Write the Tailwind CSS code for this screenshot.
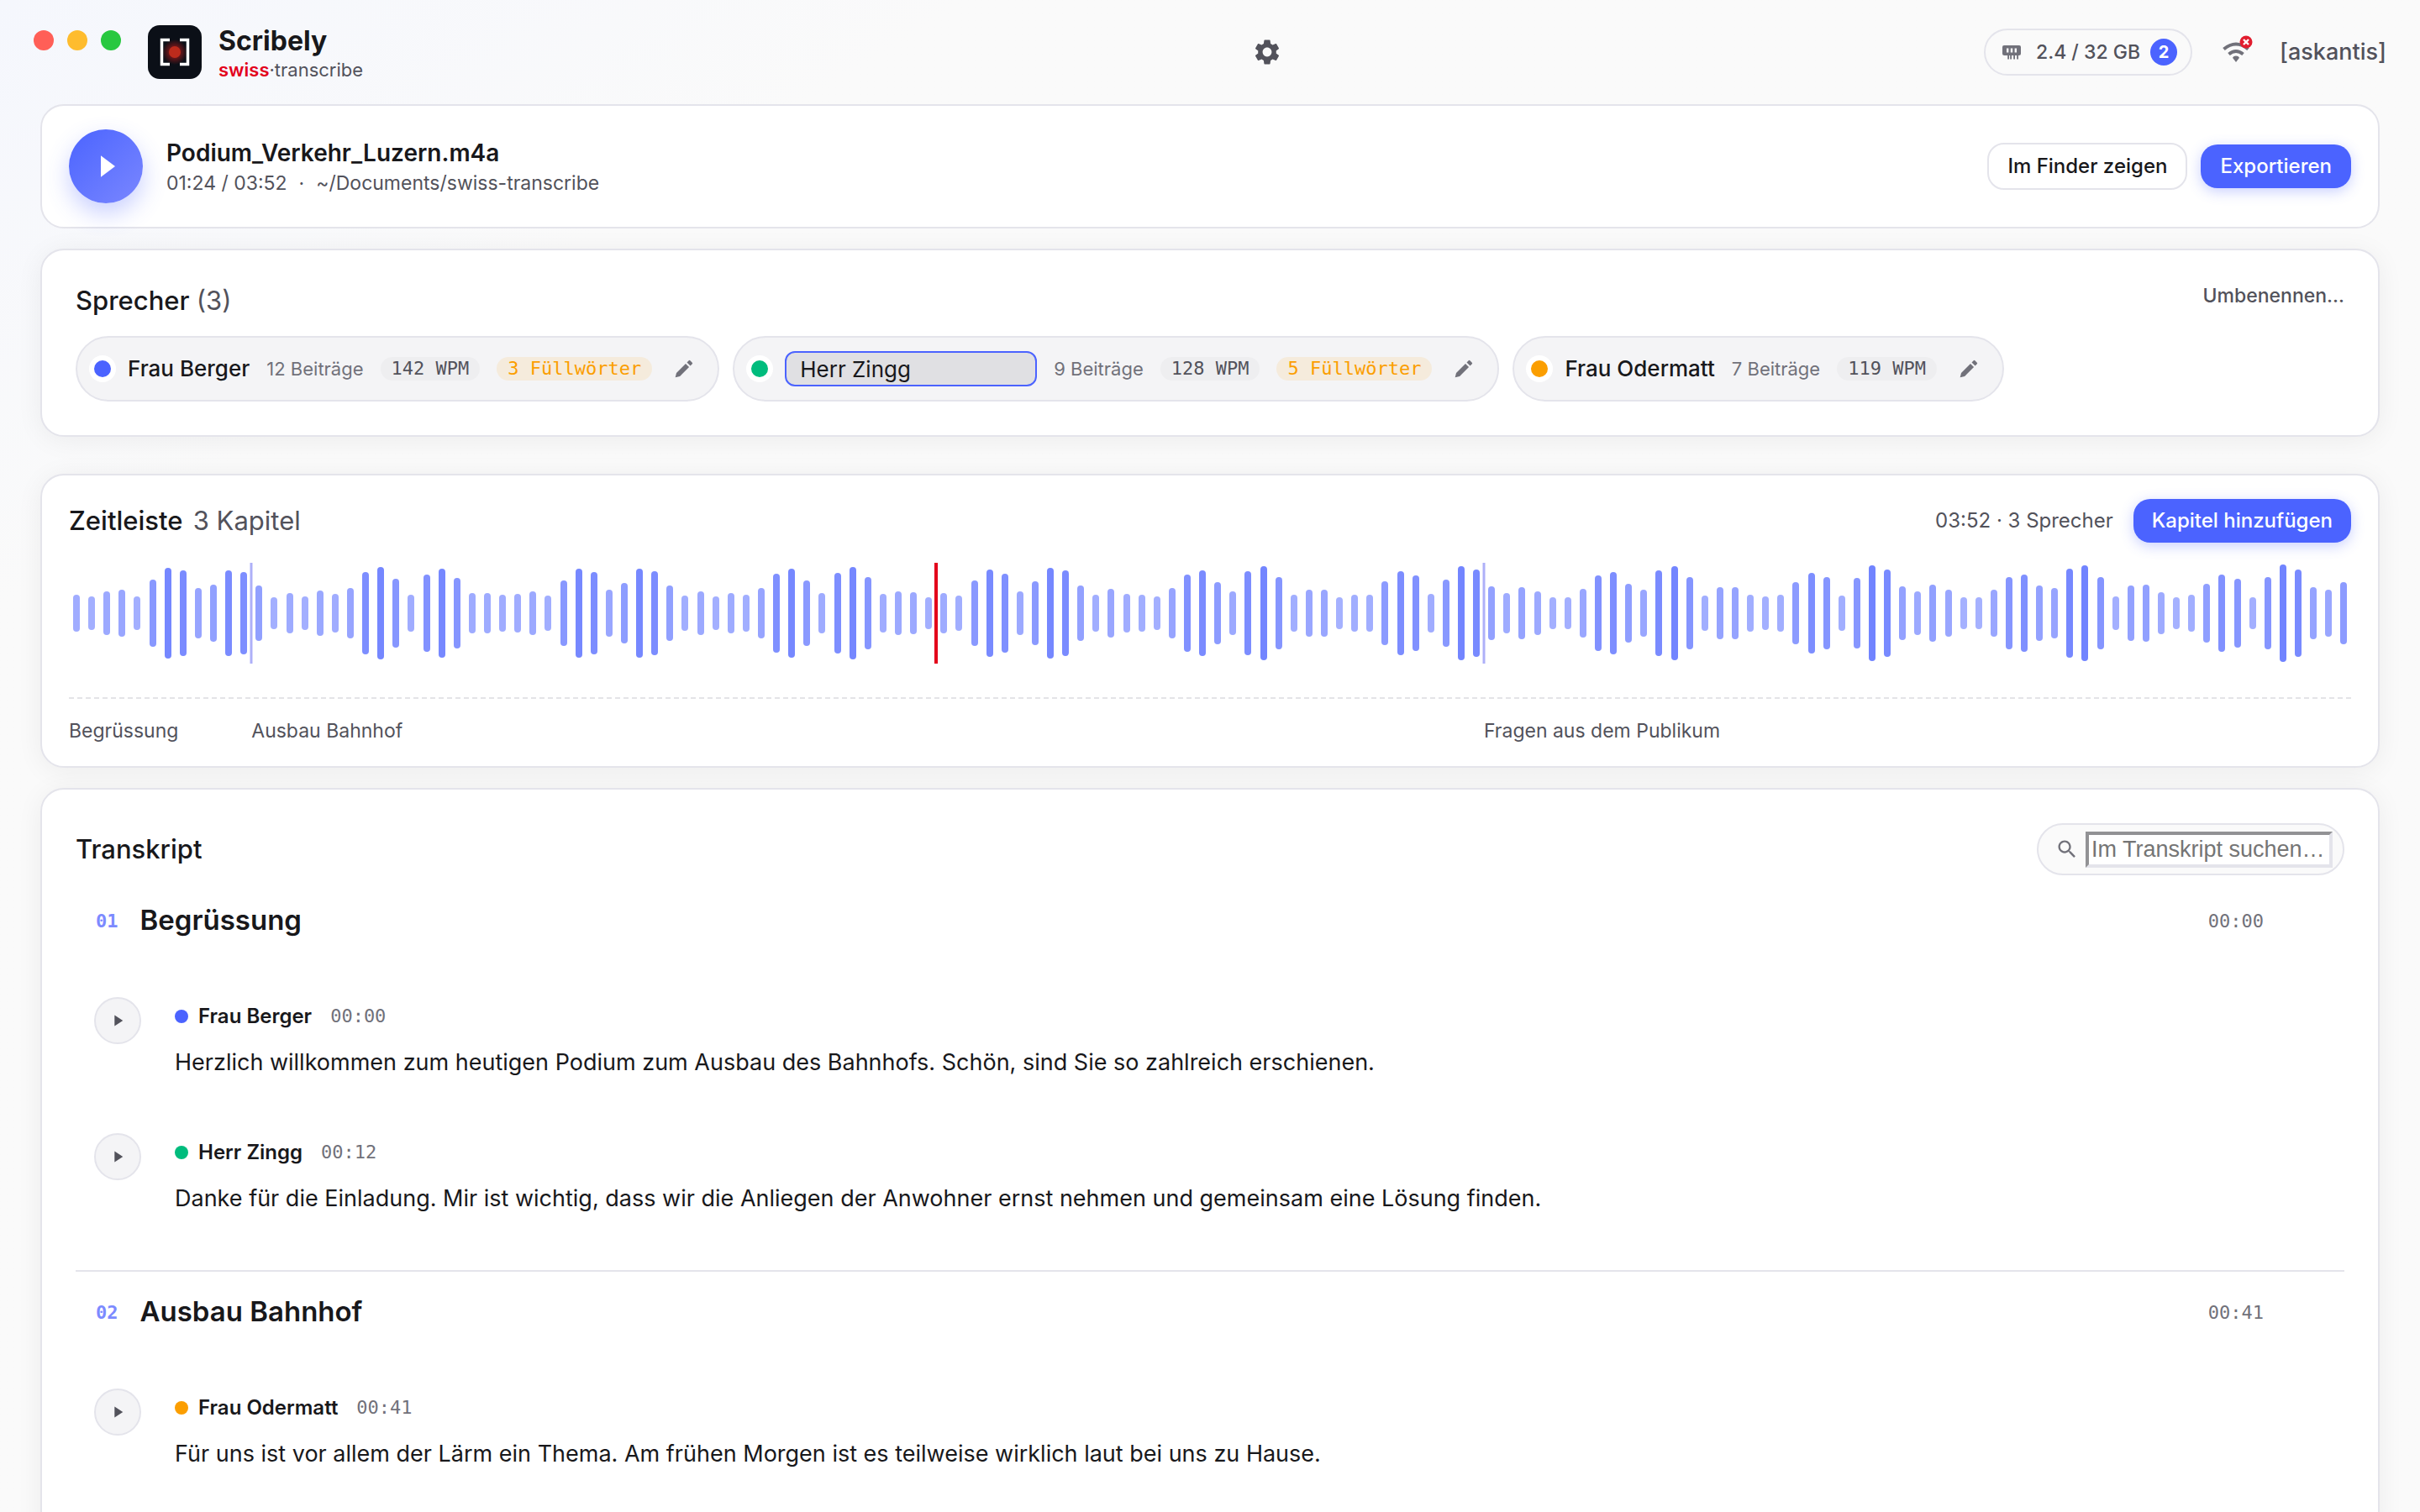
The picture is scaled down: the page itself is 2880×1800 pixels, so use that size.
<!DOCTYPE html>
<html lang="de">
<head>
<meta charset="utf-8">
<meta name="viewport" content="width=device-width, initial-scale=1">
<title>Scribely</title>
<script src="https://cdn.jsdelivr.net/npm/@tailwindcss/browser@4"></script>
</head>
<body class="h-screen overflow-hidden bg-[#fafafa] bg-linear-to-br from-[#f5f7fd] via-[#fafafa] via-20% to-[#fafafa] font-['Inter',sans-serif] text-[#18181b]">

<svg class="hidden" aria-hidden="true">
  <symbol id="pencil" viewBox="0 0 24 24"><path d="M3.2 20.8 4.3 16.2 13.7 6.8 17.2 10.3 7.8 19.7Z"/><path d="M15 5.500 16.900 3.600Q17.600 2.900 18.300 3.600L20.400 5.700Q21.100 6.400 20.400 7.100L18.500 9Z"/></symbol>
  <symbol id="play" viewBox="0 0 12 12"><path d="M2 0.500 10.500 6 2 11.500Z"/></symbol>
</svg>

<header class="relative grid h-31 grid-cols-[1fr_auto_1fr] items-center pr-10 pl-44">
  <div class="absolute top-9 left-10 flex gap-4">
    <button aria-label="Schliessen" class="size-6 rounded-full bg-[#ff5f57]"></button>
    <button aria-label="Minimieren" class="size-6 rounded-full bg-[#febc2e]"></button>
    <button aria-label="Maximieren" class="size-6 rounded-full bg-[#28c840]"></button>
  </div>
  <div class="flex items-center gap-5">
    <svg class="size-16" viewBox="0 0 64 64" aria-hidden="true">
      <defs><radialGradient id="glow"><stop offset="0.3" stop-color="#b91c1c" stop-opacity="0.7"/><stop offset="1" stop-color="#b91c1c" stop-opacity="0"/></radialGradient></defs>
      <rect width="64" height="64" rx="14" fill="#0b0f17"/>
      <circle cx="32" cy="32" r="15" fill="url(#glow)"/>
      <path d="M26 17.500H16.500V46.500H26M38 17.500H47.500V46.500H38" fill="none" stroke="#fff" stroke-width="3.500"/>
      <circle cx="32" cy="32" r="7" fill="#bd2b1c"/>
    </svg>
    <div class="pt-1.5">
      <h1 class="text-[32px] leading-9 font-bold">Scribely</h1>
      <p class="text-[22px] leading-8 text-[#52525b]"><span class="font-semibold text-[#e3001b]">swiss</span>·transcribe</p>
    </div>
  </div>
  <button aria-label="Einstellungen" class="text-[#52525b]">
    <svg class="size-9" viewBox="0 0 24 24" fill="currentColor"><path d="M19.140 12.940c.04-.3.06-.61.06-.94 0-.32-.02-.64-.07-.94l2.030-1.580c.18-.14.23-.41.12-.61l-1.920-3.320c-.12-.22-.37-.29-.59-.22l-2.390.96c-.5-.38-1.030-.7-1.620-.94l-.36-2.540c-.04-.24-.24-.41-.48-.41h-3.840c-.24 0-.43.17-.47.41l-.36 2.540c-.59.24-1.130.57-1.620.94l-2.390-.96c-.22-.08-.47 0-.59.22L2.740 8.870c-.12.21-.08.47.12.61l2.030 1.580c-.05.3-.09.63-.09.94s.02.64.07.94l-2.030 1.580c-.18.14-.23.41-.12.61l1.920 3.320c.12.22.37.29.59.22l2.390-.96c.5.38 1.030.7 1.620.94l.36 2.540c.05.24.24.41.48.41h3.840c.24 0 .44-.17.47-.41l.36-2.540c.59-.24 1.130-.56 1.620-.94l2.390.96c.22.08.47 0 .59-.22l1.920-3.320c.12-.22.07-.47-.12-.61l-2.010-1.580zM12 15.600c-1.980 0-3.600-1.620-3.600-3.600s1.620-3.600 3.600-3.600 3.600 1.620 3.600 3.600-1.620 3.600-3.600 3.600z"/></svg>
  </button>
  <div class="flex items-center justify-end">
    <button class="flex h-14 items-center rounded-full border-2 border-[#e4e4eb] pr-4 pl-5 text-[23px] font-medium text-[#52525b]">
      <svg class="mr-[18px] h-[18px] w-[22px] text-[#71717a]" viewBox="0 0 22 18" fill="currentColor" aria-hidden="true"><path fill-rule="evenodd" d="M2 1H20Q22 1 22 3V10.500Q22 13 19.500 13H19V17.500H17.200V13H15V17.500H13.200V13H11V17.500H9.200V13H8V17.500H6.200V13H2.500Q0 13 0 10.500V3Q0 1 2 1ZM5 4.500V9.500H7.400V4.500ZM9.800 4.500V9.500H12.200V4.500ZM14.600 4.500V9.500H17V4.500Z"/></svg>
      2.4 / 32 GB
      <span class="ml-3 flex size-8 items-center justify-center rounded-full bg-[#4b63ff] text-[20px] font-bold text-white">2</span>
    </button>
    <button aria-label="Netzwerk getrennt" class="relative mr-9 ml-9">
      <svg class="size-8 text-[#71717a]" viewBox="0 0 32 32" fill="none" stroke="currentColor" aria-hidden="true"><path d="M1.500 12.500Q16 0.500 30.500 12.500M7.500 18.500Q16 11.500 24.500 18.500" stroke-width="4"/><path d="M16 20.500Q19 20.500 20 22.800L16 28 12 22.800Q13 20.500 16 20.500Z" fill="currentColor" stroke="none"/></svg>
      <svg class="absolute -top-1 -right-1 size-4" viewBox="0 0 16 16" aria-hidden="true"><circle cx="8" cy="8" r="7.500" fill="#e11d2e"/><path d="M5 5 11 11M11 5 5 11" stroke="#fff" stroke-width="2.400"/></svg>
    </button>
    <a href="#" class="text-[27px] font-medium text-[#52525b]">[askantis]</a>
  </div>
</header>

<main class="px-12">
  <section class="flex items-center rounded-[28px] border-2 border-[#e4e4eb] bg-white px-8 py-7">
    <button aria-label="Wiedergabe" class="flex size-22 items-center justify-center rounded-full bg-linear-to-br from-[#4b63ff] to-[#7a86ff] text-white shadow-[0_12px_28px_rgba(75,99,255,0.3)]">
      <svg class="ml-1 h-7 w-6" viewBox="0 0 12 12" preserveAspectRatio="none" fill="currentColor"><use href="#play"/></svg>
    </button>
    <div class="ml-7 grow pt-1">
      <h2 class="text-[28px] leading-9 font-semibold">Podium_Verkehr_Luzern.m4a</h2>
      <p class="flex gap-[14px] text-[23px] leading-9 text-[#52525b]"><span>01:24 / 03:52</span><span>·</span><span>~/Documents/swiss-transcribe</span></p>
    </div>
    <div class="flex items-center gap-4 text-[24px] font-medium">
      <button class="h-14 rounded-[20px] border-2 border-[#e4e4eb] bg-white px-[22px]">Im Finder zeigen</button>
      <button class="h-13 rounded-[20px] bg-[#4b63ff] px-[23px] text-white shadow-[0_4px_16px_rgba(75,99,255,0.3)]">Exportieren</button>
    </div>
  </section>

  <section class="mt-6 rounded-[28px] border-2 border-[#e4e4eb] bg-white p-10 shadow-[0_4px_32px_rgba(0,0,0,0.06)]">
    <div class="flex items-start justify-between">
      <h2 class="text-[31px] leading-10 font-medium">Sprecher <span class="font-normal text-[#52525b]">(3)</span></h2>
      <button class="text-[23px] leading-7 font-medium text-[#52525b]">Umbenennen…</button>
    </div>
    <ul class="mt-[22px] flex gap-4 text-[22px] leading-7 text-[#71717a]">
      <li class="flex items-center gap-5 rounded-full border-2 border-[#e4e4eb] bg-[#f4f4f6] py-[19px] pr-[22px] pl-5">
        <span class="size-5 rounded-full bg-[#4b63ff] ring-6 ring-white"></span>
        <span class="text-[26px] leading-9 font-medium text-[#18181b]">Frau Berger</span>
        <span>12 Beiträge</span>
        <span class="rounded-full bg-[#eeeef0] px-[13px] font-['DejaVu_Sans_Mono',monospace] text-[#52525b]">142 WPM</span>
        <span class="rounded-full bg-[#f5ebdc] px-[13px] font-['DejaVu_Sans_Mono',monospace] text-[#fb9e00]">3 Füllwörter</span>
        <button aria-label="Frau Berger umbenennen" class="flex size-9 items-center justify-center"><svg class="size-7" fill="currentColor"><use href="#pencil"/></svg></button>
      </li>
      <li class="flex items-center gap-5 rounded-full border-2 border-[#e4e4eb] bg-[#f4f4f6] py-[16px] pr-[22px] pl-5">
        <span class="size-5 rounded-full bg-[#00bc7d] ring-6 ring-white"></span>
        <input type="text" aria-label="Name des Sprechers" value="Herr Zingg" class="h-[42px] w-75 rounded-xl border-2 border-[#4b63ff] bg-[#e0e0e3] px-4 text-[26px] text-[#18181b] outline-none">
        <span>9 Beiträge</span>
        <span class="rounded-full bg-[#eeeef0] px-[13px] font-['DejaVu_Sans_Mono',monospace] text-[#52525b]">128 WPM</span>
        <span class="rounded-full bg-[#f5ebdc] px-[13px] font-['DejaVu_Sans_Mono',monospace] text-[#fb9e00]">5 Füllwörter</span>
        <button aria-label="Herr Zingg umbenennen" class="flex size-9 items-center justify-center"><svg class="size-7" fill="currentColor"><use href="#pencil"/></svg></button>
      </li>
      <li class="flex items-center gap-5 rounded-full border-2 border-[#e4e4eb] bg-[#f4f4f6] py-[19px] pr-[22px] pl-5">
        <span class="size-5 rounded-full bg-[#fb9e00] ring-6 ring-white"></span>
        <span class="text-[26px] leading-9 font-medium text-[#18181b]">Frau Odermatt</span>
        <span>7 Beiträge</span>
        <span class="rounded-full bg-[#eeeef0] px-[13px] font-['DejaVu_Sans_Mono',monospace] text-[#52525b]">119 WPM</span>
        <button aria-label="Frau Odermatt umbenennen" class="flex size-9 items-center justify-center"><svg class="size-7" fill="currentColor"><use href="#pencil"/></svg></button>
      </li>
    </ul>
  </section>

  <section class="mt-11 rounded-[28px] border-2 border-[#e4e4eb] bg-white px-8 py-7 shadow-[0_4px_32px_rgba(0,0,0,0.06)]">
    <div class="flex items-center">
      <h2 class="grow text-[31px] font-medium">Zeitleiste <span class="ml-1 font-normal text-[#52525b]">3 Kapitel</span></h2>
      <span class="mr-6 text-[24px] text-[#52525b]">03:52 · 3 Sprecher</span>
      <button class="h-13 rounded-[20px] bg-[#4b63ff] px-[22px] text-[24px] font-medium text-white shadow-[0_4px_16px_rgba(75,99,255,0.3)]">Kapitel hinzufügen</button>
    </div>
    <div class="relative mt-6 h-30">
      <div id="wave" class="flex h-full items-center"></div>
      <div class="absolute inset-y-0 w-[3px] -translate-x-1/2 bg-[#4b4ff0]/45" style="left:8%"></div>
      <div class="absolute inset-y-0 w-[3px] -translate-x-1/2 bg-[#4b4ff0]/45" style="left:62%"></div>
      <div class="absolute inset-y-0 w-1 -translate-x-1/2 bg-[#e3001b]" style="left:38%"></div>
    </div>
    <svg class="mt-10 h-[2px] w-full" aria-hidden="true"><line x1="0" y1="1" x2="100%" y2="1" stroke="#e4e4e7" stroke-width="2" stroke-dasharray="6 4"/></svg>
    <div class="mt-6 grid grid-cols-[8fr_54fr_38fr] text-[23px] leading-7 text-[#52525b]">
      <span>Begrüssung</span><span>Ausbau Bahnhof</span><span>Fragen aus dem Publikum</span>
    </div>
  </section>

  <section class="mt-6 rounded-[28px] border-2 border-[#e4e4eb] bg-white p-10 shadow-[0_4px_32px_rgba(0,0,0,0.06)]">
    <div class="flex items-center justify-between">
      <h2 class="text-[31px] leading-10 font-medium">Transkript</h2>
      <label class="flex h-[62px] items-center rounded-full border-2 border-[#e4e4eb] bg-[#fafafa] pr-3 pl-5 text-[#71717a]">
        <svg class="mr-2 size-7" viewBox="0 0 24 24" fill="currentColor" aria-hidden="true"><path d="M15.500 14h-.79l-.28-.27C15.410 12.590 16 11.110 16 9.500 16 5.910 13.090 3 9.500 3S3 5.910 3 9.500 5.910 16 9.500 16c1.610 0 3.090-.59 4.230-1.570l.27.28v.79l5 4.990L20.490 19l-4.990-5zm-6 0C7.010 14 5 11.990 5 9.500S7.010 5 9.500 5 14 7.010 14 9.500 11.990 14 9.500 14z"/></svg>
        <input type="text" aria-label="Im Transkript suchen" placeholder="Im Transkript suchen…" class="h-[43px] w-[294px] border-4 border-t-[#929295] border-r-[#e4e4eb] border-b-[#e4e4eb] border-l-[#929295] bg-white px-[3px] font-['Liberation_Sans',sans-serif] text-[27px] text-[#18181b] placeholder:text-[#757575]">
      </label>
    </div>

    <article class="mt-8">
      <div class="flex h-11 items-center pr-24 pl-6 font-['DejaVu_Sans_Mono',monospace] text-[22px]">
        <span class="font-bold text-[#7c8aff]">01</span>
        <h3 class="ml-[26px] grow font-['Inter',sans-serif] text-[33px] font-semibold">Begrüssung</h3>
        <time class="text-[#71717a]">00:00</time>
      </div>
      <div class="mt-[45px]">
        <div class="flex gap-10 pt-6 pb-[38px] pl-[22px]">
          <button aria-label="Ab 00:00 abspielen" class="flex size-14 items-center justify-center rounded-full border-2 border-[#e4e4eb] bg-[#f4f4f6] text-[#52525b]"><svg class="ml-px size-[14px]" fill="currentColor"><use href="#play"/></svg></button>
          <div class="pt-[7px]">
            <p class="flex items-center gap-3 text-[24px] leading-8 font-semibold"><span class="size-4 rounded-full bg-[#4b63ff]"></span>Frau Berger<time class="ml-2.5 font-['DejaVu_Sans_Mono',monospace] text-[22px] font-normal text-[#71717a]">00:00</time></p>
            <p class="mt-4 text-[27px] leading-[46px]">Herzlich willkommen zum heutigen Podium zum Ausbau des Bahnhofs. Schön, sind Sie so zahlreich erschienen.</p>
          </div>
        </div>
        <div class="flex gap-10 pt-[23px] pb-[38px] pl-[22px]">
          <button aria-label="Ab 00:12 abspielen" class="flex size-14 items-center justify-center rounded-full border-2 border-[#e4e4eb] bg-[#f4f4f6] text-[#52525b]"><svg class="ml-px size-[14px]" fill="currentColor"><use href="#play"/></svg></button>
          <div class="pt-[7px]">
            <p class="flex items-center gap-3 text-[24px] leading-8 font-semibold"><span class="size-4 rounded-full bg-[#00bc7d]"></span>Herr Zingg<time class="ml-2.5 font-['DejaVu_Sans_Mono',monospace] text-[22px] font-normal text-[#71717a]">00:12</time></p>
            <p class="mt-4 text-[27px] leading-[46px]">Danke für die Einladung. Mir ist wichtig, dass wir die Anliegen der Anwohner ernst nehmen und gemeinsam eine Lösung finden.</p>
          </div>
        </div>
      </div>
    </article>

    <article class="mt-6 border-t-2 border-[#e4e4eb] pt-[26px]">
      <div class="flex h-11 items-center pr-24 pl-6 font-['DejaVu_Sans_Mono',monospace] text-[22px]">
        <span class="font-bold text-[#7c8aff]">02</span>
        <h3 class="ml-[26px] grow font-['Inter',sans-serif] text-[33px] font-semibold">Ausbau Bahnhof</h3>
        <time class="text-[#71717a]">00:41</time>
      </div>
      <div class="mt-[45px]">
        <div class="flex gap-10 pt-6 pb-[38px] pl-[22px]">
          <button aria-label="Ab 00:41 abspielen" class="flex size-14 items-center justify-center rounded-full border-2 border-[#e4e4eb] bg-[#f4f4f6] text-[#52525b]"><svg class="ml-px size-[14px]" fill="currentColor"><use href="#play"/></svg></button>
          <div class="pt-[7px]">
            <p class="flex items-center gap-3 text-[24px] leading-8 font-semibold"><span class="size-4 rounded-full bg-[#fb9e00]"></span>Frau Odermatt<time class="ml-2.5 font-['DejaVu_Sans_Mono',monospace] text-[22px] font-normal text-[#71717a]">00:41</time></p>
            <p class="mt-4 text-[27px] leading-[46px]">Für uns ist vor allem der Lärm ein Thema. Am frühen Morgen ist es teilweise wirklich laut bei uns zu Hause.</p>
          </div>
        </div>
      </div>
    </article>
  </section>
</main>

<script>
// Peak amplitudes of the recording, 180 = full height
const peaks = [
  67,60,77,84,60,119,163,153,89,102,153,146,99,58,71,60,80,70,89,146,164,123,66,137,159,126,71,72,67,68,
  77,62,118,159,148,83,109,159,150,99,62,77,59,73,65,89,142,159,117,71,143,164,128,68,78,75,58,71,64,116,
  155,142,77,115,163,152,98,65,86,68,65,61,89,137,153,110,77,149,167,129,65,84,84,57,65,65,113,149,135,70,
  119,167,155,96,71,92,77,58,58,86,134,146,104,83,153,169,129,62,92,92,65,61,65,110,143,129,63,125,171,155,
  95,77,102,84,56,56,84,128,139,98,89,158,172,128,59,98,101,74,56,65,105,137,122,58,129,173,155,92,83,110
];
document.getElementById('wave').innerHTML = peaks.map(p =>
  `<span class="flex h-full flex-1 items-center justify-center"><i class="w-2 rounded-full bg-[#4b63ff]" style="height:${p / 1.8}%;opacity:${(0.36 + p / 400).toFixed(2)}"></i></span>`
).join('');
</script>
</body>
</html>
